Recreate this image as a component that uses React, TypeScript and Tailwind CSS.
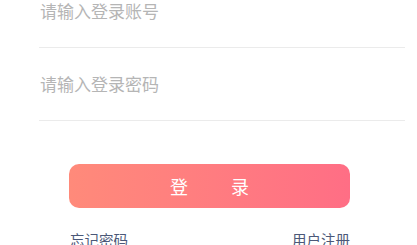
export default function App() {
  const font = { fontFamily: '"Noto Sans CJK SC", "Noto Sans", sans-serif' };

  return (
    <div className="w-[417px] h-[245px] overflow-hidden bg-white" style={font}>
      {/* Inputs */}
      <div className="pl-[39px] pr-[12px] mt-[-25px]">
        <div className="h-[73px] flex items-center border-b border-[#ebebeb]">
          <input
            className="w-full pl-[1px] text-[17px] text-[#333] placeholder:text-[#b5b5b5] outline-none bg-transparent"
            placeholder="请输入登录账号"
          />
        </div>
        <div className="h-[73px] flex items-center border-b border-[#ebebeb]">
          <input
            type="password"
            className="w-full pl-[1px] text-[17px] text-[#333] placeholder:text-[#b5b5b5] outline-none bg-transparent"
            placeholder="请输入登录密码"
          />
        </div>
      </div>

      {/* Login button */}
      <div className="w-[281px] ml-[69px] mt-[43px]">
        <button className="w-full h-[44px] rounded-[10px] bg-gradient-to-r from-[#ff8a7a] to-[#ff6e85] flex items-center justify-center gap-[43px] text-white text-[18px] leading-none">
          <span>登</span>
          <span>录</span>
        </button>

        {/* Links */}
        <div className="flex justify-between mt-[22px] text-[14.5px] leading-[20px] text-[#4b5878]">
          <a className="pl-[1px]">忘记密码</a>
          <a>用户注册</a>
        </div>
      </div>
    </div>
  );
}
